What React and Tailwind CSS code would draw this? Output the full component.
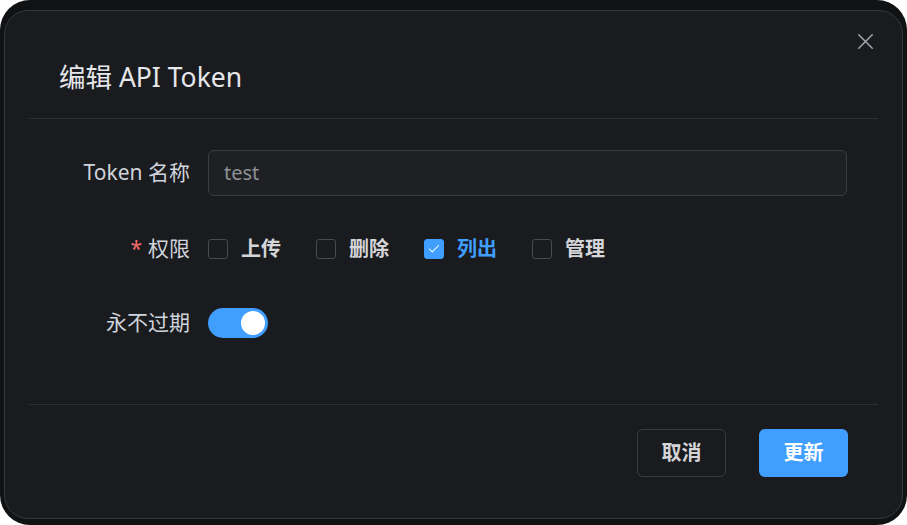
import { X, Check } from "lucide-react";

const perms = [
  { name: "上传", checked: false },
  { name: "删除", checked: false },
  { name: "列出", checked: true },
  { name: "管理", checked: false },
];

const font = { fontFamily: '"Noto Sans", "Noto Sans CJK SC", sans-serif' };

const Row = ({ label, required, children, className = "" }) => (
  <div className={`flex items-center h-[46px] ${className}`}>
    <div className="w-[161px] text-right text-[21px] text-[#cfd3dc] whitespace-nowrap">
      {required && <span className="text-[#f56c6c] mr-[6px]">*</span>}
      {label}
    </div>
    <div className="ml-[18px] flex-1 flex items-center">{children}</div>
  </div>
);

export default function App() {
  return (
    <div className="w-[907px] h-[525px] bg-white" style={font}>
      <div className="w-full h-full rounded-[30px] bg-[#111214] pt-[10px] px-[4px] pb-[6px]">
        <div className="relative h-full rounded-[24px] border border-[#36373b] bg-[#1a1b1e] flex flex-col">
          <button className="absolute right-[23px] top-[17px] text-[#a3a6ad]">
            <X size={27} strokeWidth={1.3} />
          </button>

          <div className="pl-[54px] pt-[50px] pb-[25px]">
            <h2 className="h-[32px] leading-[32px] text-[26.5px] text-[#e5e7eb] whitespace-nowrap">编辑 API Token</h2>
          </div>
          <div className="mx-[24px] border-t border-[#2e2f33]"></div>

          <div className="pl-[24px] pr-[55px] pt-[31px] flex flex-col">
            <Row label="Token 名称">
              <div className="w-full h-[46px] rounded-[6px] border border-[#3c3d42] bg-[#1f2024] flex items-center px-[15px] text-[20px] text-[#8d9095]">
                test
              </div>
            </Row>

            <Row label="权限" required className="mt-[30px]">
              {perms.map((p) => (
                <div key={p.name} className="w-[108px] flex items-center">
                  <span
                    className={`w-[20px] h-[20px] rounded-[3px] border flex items-center justify-center ${
                      p.checked ? "bg-[#409eff] border-[#409eff]" : "border-[#4a4b50] bg-transparent"
                    }`}
                  >
                    {p.checked && <Check size={14} strokeWidth={1.75} className="text-white" />}
                  </span>
                  <span
                    className={`ml-[13px] text-[20px] font-semibold whitespace-nowrap ${
                      p.checked ? "text-[#409eff]" : "text-[#d4d5d9]"
                    }`}
                  >
                    {p.name}
                  </span>
                </div>
              ))}
            </Row>

            <Row label="永不过期" className="mt-[28px]">
              <div className="w-[60px] h-[30px] rounded-full bg-[#409eff] flex items-center justify-end pr-[3px]">
                <span className="w-[24px] h-[24px] rounded-full bg-white"></span>
              </div>
            </Row>
          </div>

          <div className="mx-[24px] mt-[58px] border-t border-[#2e2f33]"></div>

          <div className="flex justify-end gap-[33px] pr-[54px] pt-[24px]">
            <button className="w-[89px] h-[48px] rounded-[6px] border border-[#3a3b40] text-[20px] font-semibold text-[#d4d5d9]">
              取消
            </button>
            <button className="w-[89px] h-[48px] rounded-[6px] bg-[#409eff] text-[20px] font-semibold text-white">
              更新
            </button>
          </div>
        </div>
      </div>
    </div>
  );
}
